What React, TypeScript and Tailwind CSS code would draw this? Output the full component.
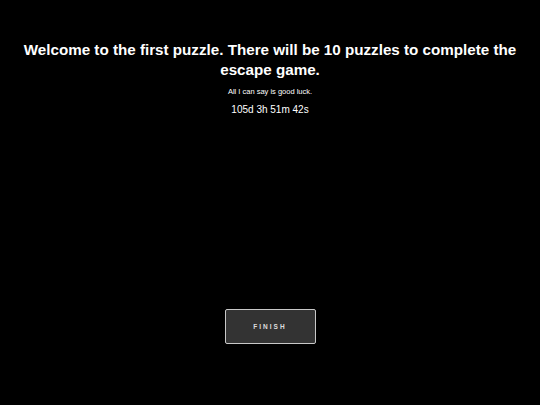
export default function App() {
  return (
    <div className="flex h-[405px] w-[540px] flex-col items-center bg-black font-['Liberation_Sans',Arial,sans-serif] text-white">
      <h1 className="mt-[40px] px-[8px] text-center text-[15.2px] font-bold leading-[20px]">
        Welcome to the first puzzle. There will be 10 puzzles to complete the escape game.
      </h1>
      <p className="mt-[7px] text-[7.5px] leading-[10px]">All I can say is good luck.</p>
      <p className="mt-[6px] text-[10px] leading-[14px]">105d 3h 51m 42s</p>
      <button className="mt-[192px] flex h-[35px] w-[91px] items-center justify-center rounded-[2px] border border-[#c8c8c8] bg-[#333333] text-[6.5px] font-bold tracking-[2px] text-[#dddddd]">
        FINISH
      </button>
    </div>
  );
}
